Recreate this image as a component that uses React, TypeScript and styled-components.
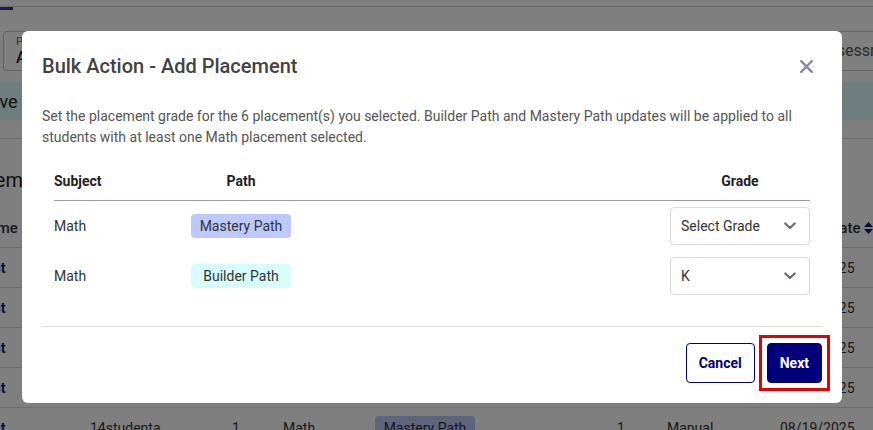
import React from "react";
import styled, { createGlobalStyle } from "styled-components";

const GlobalStyle = createGlobalStyle`
  html, body {
    margin: 0;
    padding: 0;
    height: 100%;
    overflow: hidden;
    background: #fff;
  }
  body {
    font-family: Roboto, "Liberation Sans", Arial, sans-serif;
    color: #222;
  }
  * { box-sizing: border-box; }
`;

/* ---------- page behind the dialog ---------- */

const Page = styled.div`
  width: 990px;
  margin-left: -60px;
`;

const TabRule = styled.div`
  height: 7px;
  border-bottom: 1px solid #d6d6d6;
`;

const TabIndicator = styled.div`
  width: 73px;
  height: 3px;
  background: #4a2bb0;
`;

const Filters = styled.div`
  display: flex;
  gap: 16px;
  margin-top: 21px;
  padding-left: 63px;
`;

const FilterBox = styled.div<{ $width: number }>`
  width: ${(p) => p.$width}px;
  height: 40px;
  border: 1px solid #c8c8c8;
  border-radius: 4px;
  padding: 4px 12px;
  display: flex;
  flex-direction: column;
  justify-content: center;
  flex-shrink: 0;
`;

const FilterLabel = styled.span`
  font-size: 11px;
  line-height: 13px;
  color: #666;
`;

const FilterValue = styled.span<{ $placeholder?: boolean }>`
  font-size: 16px;
  line-height: 20px;
  font-weight: ${(p) => (p.$placeholder ? 400 : 500)};
  color: ${(p) => (p.$placeholder ? "#555" : "#222")};
`;

const Banner = styled.div`
  margin-top: 11px;
  height: 38px;
  background: #dcfdfd;
  display: flex;
  align-items: center;
  padding-left: 5px;
  font-size: 18px;
  color: #222;
`;

const Rule = styled.div`
  margin-top: 18px;
  border-top: 1px solid #e3e3e3;
`;

const PageHeading = styled.h2`
  margin: 25px 0 0;
  padding-left: 16px;
  font-size: 20px;
  line-height: 32px;
  font-weight: 400;
  color: #222;
`;

const BgTable = styled.div`
  margin-top: 12px;
`;

const BgRow = styled.div<{ $head?: boolean }>`
  display: grid;
  grid-template-columns: 112px 142px 51px 92px 242px 50px 113px 140px;
  align-items: center;
  height: 40px;
  padding-left: 38px;
  border-bottom: 1px solid #dcdcdc;
  font-size: ${(p) => (p.$head ? "15px" : "14px")};
  font-weight: ${(p) => (p.$head ? 500 : 400)};
  color: #333;
`;

const HeadCell = styled.span`
  display: flex;
  align-items: center;
  gap: 4px;
  white-space: nowrap;
`;

const NameLink = styled.span`
  color: #14147a;
  font-weight: 700;
`;

const Badge = styled.span<{ $kind: "mastery" | "builder" }>`
  display: inline-flex;
  align-items: center;
  justify-content: center;
  width: 100px;
  height: 24px;
  border-radius: 4px;
  font-size: 14px;
  color: #333;
  background: ${(p) => (p.$kind === "mastery" ? "#bdc9fd" : "#d6fdfb")};
`;

const SortUp = () => (
  <svg width="6" height="5" viewBox="0 0 6 5">
    <path d="M0 5 L3 0 L6 5 Z" fill="#14147a" />
  </svg>
);

const SortBoth = () => (
  <svg width="9" height="12" viewBox="0 0 9 12">
    <path d="M0 5 L4.5 0 L9 5 Z M0 7 L4.5 12 L9 7 Z" fill="#14147a" />
  </svg>
);

const bgRows = ["14studentd", "14studentc", "14studentb", "14studente", "14studenta"];

/* ---------- dialog ---------- */

const Overlay = styled.div`
  position: fixed;
  inset: 0;
  background: rgba(0, 0, 0, 0.5);
  display: flex;
  justify-content: center;
  align-items: flex-start;
  padding: 31px 9px 0 0;
`;

const Dialog = styled.div`
  width: 820px;
  background: #fff;
  border-radius: 6px;
`;

const DialogHeader = styled.div`
  display: flex;
  align-items: center;
  justify-content: space-between;
  padding: 20px 26px 20px 20px;
`;

const Title = styled.h3`
  margin: 0;
  font-size: 20px;
  line-height: 30px;
  font-weight: 500;
  color: #424242;
`;

const CloseButton = styled.button`
  width: 20px;
  height: 20px;
  padding: 0;
  border: none;
  background: none;
  display: flex;
  align-items: center;
  justify-content: center;
  cursor: pointer;
`;

const DialogBody = styled.div`
  padding: 5px 20px 25px;
`;

const Description = styled.p`
  margin: 0 0 13px;
  font-size: 14px;
  line-height: 21px;
  color: #555;
`;

const PlacementTable = styled.div`
  margin: 0 12px;
`;

const PlacementRow = styled.div<{ $head?: boolean }>`
  display: grid;
  grid-template-columns: 137px 100px 1fr 140px;
  align-items: center;
  height: ${(p) => (p.$head ? "40px" : "50px")};
  border-bottom: ${(p) => (p.$head ? "1px solid #9b99a8" : "none")};
  font-size: 14px;
  font-weight: ${(p) => (p.$head ? 700 : 400)};
  color: ${(p) => (p.$head ? "#222" : "#333")};
`;

const Cell = styled.span<{ $center?: boolean }>`
  display: flex;
  justify-content: ${(p) => (p.$center ? "center" : "flex-start")};
`;

const SelectBox = styled.div`
  display: flex;
  align-items: center;
  justify-content: space-between;
  width: 140px;
  height: 38px;
  padding: 0 13px 0 10px;
  border: 1px solid #dcdce0;
  border-radius: 4px;
  font-size: 14px;
  color: #333;
  background: #fff;
`;

const DialogFooter = styled.div`
  margin: 0 20px;
  border-top: 1px solid #dedee3;
  padding: 16px 0 20px;
  display: flex;
  justify-content: flex-end;
  align-items: center;
  gap: 12px;
`;

const Button = styled.button<{ $primary?: boolean }>`
  height: 40px;
  padding: 0 12px;
  border: 1px solid #00007a;
  border-radius: 4px;
  background: ${(p) => (p.$primary ? "#00007a" : "#fff")};
  color: ${(p) => (p.$primary ? "#fff" : "#00007a")};
  font-family: Roboto, "Liberation Sans", Arial, sans-serif;
  font-size: 14px;
  font-weight: 700;
  cursor: pointer;
`;

/* red annotation frame drawn round the primary action */
const Highlight = styled.span`
  display: flex;
  margin: -8px;
  padding: 5px;
  border: 3px solid #e60000;
`;

const CloseIcon = () => (
  <svg width="13" height="13" viewBox="0 0 13 13">
    <path d="M1.2 1.2 L11.8 11.8 M11.8 1.2 L1.2 11.8" stroke="#8a88a6" strokeWidth="2.4" strokeLinecap="round" />
  </svg>
);

const Chevron = () => (
  <svg width="12" height="8" viewBox="0 0 12 8">
    <path d="M1.3 1.5 L6 6 L10.7 1.5" stroke="#6c6a82" strokeWidth="2.2" fill="none" strokeLinecap="round" strokeLinejoin="round" />
  </svg>
);

const placements = [
  { subject: "Math", path: "mastery" as const, label: "Mastery Path", grade: "Select Grade" },
  { subject: "Math", path: "builder" as const, label: "Builder Path", grade: "K" },
];

export default function App() {
  return (
    <>
      <GlobalStyle />
      <Page>
        <TabRule />
        <TabIndicator />
        <Filters>
          <FilterBox $width={260}>
            <FilterLabel>Program</FilterLabel>
            <FilterValue>All Programs</FilterValue>
          </FilterBox>
          <FilterBox $width={510}>
            <FilterLabel>School</FilterLabel>
            <FilterValue>All Schools</FilterValue>
          </FilterBox>
          <FilterBox $width={220}>
            <FilterValue $placeholder>Assessment</FilterValue>
          </FilterBox>
        </Filters>
        <Banner>You have bulk selected 6 placements.</Banner>
        <Rule />
        <PageHeading>Placements</PageHeading>
        <BgTable>
          <BgRow $head>
            <HeadCell>
              Name <SortUp />
            </HeadCell>
            <HeadCell>Username</HeadCell>
            <HeadCell>Grade</HeadCell>
            <HeadCell>Subject</HeadCell>
            <HeadCell>Path</HeadCell>
            <HeadCell>Level</HeadCell>
            <HeadCell>Type</HeadCell>
            <HeadCell>
              Placed Date <SortBoth />
            </HeadCell>
          </BgRow>
          {bgRows.map((user) => (
            <BgRow key={user}>
              <NameLink>Test</NameLink>
              <span>{user}</span>
              <span>1</span>
              <span>Math</span>
              <span>
                <Badge $kind="mastery">Mastery Path</Badge>
              </span>
              <span>1</span>
              <span>Manual</span>
              <span>08/19/2025</span>
            </BgRow>
          ))}
        </BgTable>
      </Page>

      <Overlay>
        <Dialog role="dialog">
          <DialogHeader>
            <Title>Bulk Action - Add Placement</Title>
            <CloseButton aria-label="Close">
              <CloseIcon />
            </CloseButton>
          </DialogHeader>
          <DialogBody>
            <Description>
              Set the placement grade for the 6 placement(s) you selected. Builder Path and Mastery Path updates will be
              applied to all students with at least one Math placement selected.
            </Description>
            <PlacementTable>
              <PlacementRow $head>
                <Cell>Subject</Cell>
                <Cell $center>Path</Cell>
                <Cell />
                <Cell $center>Grade</Cell>
              </PlacementRow>
              {placements.map((p) => (
                <PlacementRow key={p.path}>
                  <Cell>{p.subject}</Cell>
                  <Cell $center>
                    <Badge $kind={p.path}>{p.label}</Badge>
                  </Cell>
                  <Cell />
                  <SelectBox>
                    <span>{p.grade}</span>
                    <Chevron />
                  </SelectBox>
                </PlacementRow>
              ))}
            </PlacementTable>
          </DialogBody>
          <DialogFooter>
            <Button>Cancel</Button>
            <Highlight>
              <Button $primary>Next</Button>
            </Highlight>
          </DialogFooter>
        </Dialog>
      </Overlay>
    </>
  );
}
